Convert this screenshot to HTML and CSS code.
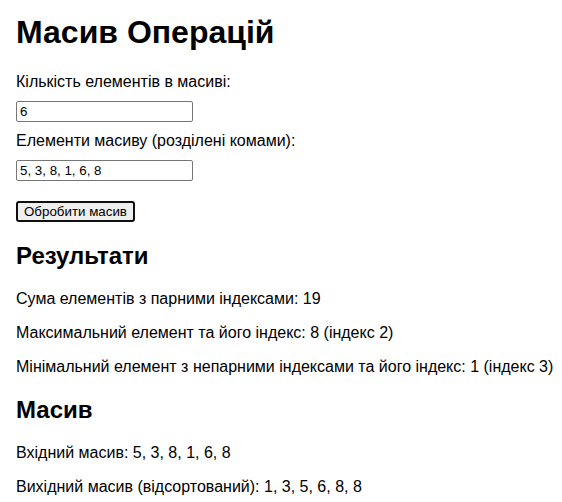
FILE: index.html
```html
<!DOCTYPE html>
<html lang="uk">
<head>
<meta charset="utf-8">
<title>Масив Операцій</title>
<link rel="stylesheet" href="styles.css">
</head>
<body>
<main class="page">
  <h1 class="title">Масив Операцій</h1>
  <form class="form">
    <label class="label" for="count">Кількість елементів в масиві:</label>
    <input class="field" id="count" type="text" value="6">
    <label class="label" for="items">Елементи масиву (розділені комами):</label>
    <input class="field" id="items" type="text" value="5, 3, 8, 1, 6, 8">
    <button class="submit" type="button">Обробити масив</button>
  </form>
  <section class="section">
    <h2 class="heading">Результати</h2>
    <p class="line">Сума елементів з парними індексами: 19</p>
    <p class="line">Максимальний елемент та його індекс: 8 (індекс 2)</p>
    <p class="line">Мінімальний елемент з непарними індексами та його індекс: 1 (індекс 3)</p>
  </section>
  <section class="section">
    <h2 class="heading">Масив</h2>
    <p class="line">Вхідний масив: 5, 3, 8, 1, 6, 8</p>
    <p class="line">Вихідний масив (відсортований): 1, 3, 5, 6, 8, 8</p>
  </section>
</main>
</body>
</html>
```
FILE: styles.css
```css
* {
  box-sizing: border-box;
}

body {
  margin: 0;
  background: #fff;
  color: #000;
  font: 16px/18px "Liberation Sans", Arial, sans-serif;
}

.page {
  padding: 14px 0 0 16px;
}

.title {
  margin: 0 0 23px;
  font-size: 32px;
  line-height: 36px;
}

.form {
  display: flex;
  flex-direction: column;
  align-items: flex-start;
}

.label {
  margin-bottom: 10px;
}

.field {
  width: 177px;
  height: 21px;
  margin: 0 0 10px;
  padding: 1px 3px;
  border: 1px solid #767676;
  border-radius: 2px;
  background: #fff;
  color: #000;
  font-family: "Liberation Sans", Arial, sans-serif;
}

.submit {
  height: 21px;
  margin-top: 10px;
  padding: 0 6px;
  border: 2px solid #101010;
  border-radius: 3px;
  background: #efefef;
  color: #000;
  font-family: "Liberation Sans", Arial, sans-serif;
}

.section {
  margin-top: 20px;
}

.heading {
  margin: 0 0 20px;
  font-size: 24px;
  line-height: 28px;
}

.line {
  margin: 0 0 16px;
}
```
